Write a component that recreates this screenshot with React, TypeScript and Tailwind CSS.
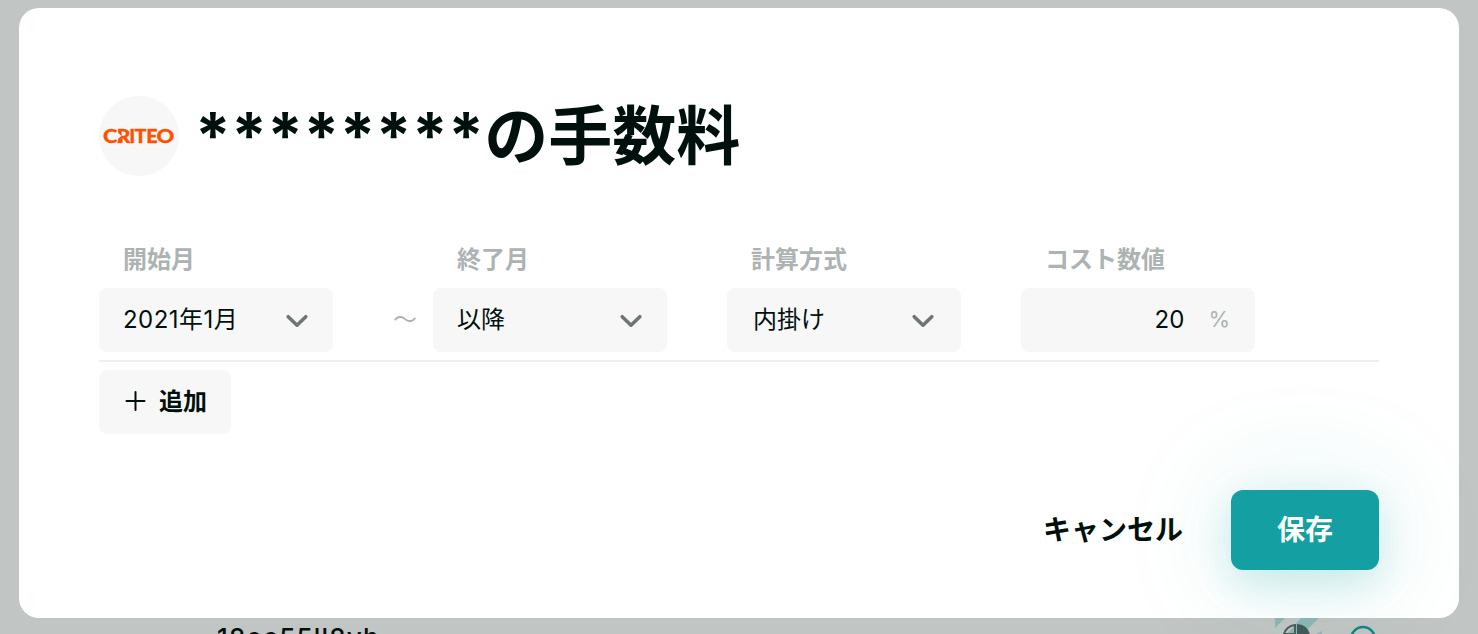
import type { ReactNode } from "react";

const columns = [
  { label: "開始月", value: "2021年1月", gap: "mr-[100px]", pad: "px-6" },
  { label: "終了月", value: "以降", gap: "mr-[60px]", pad: "px-6" },
  { label: "計算方式", value: "内掛け", gap: "mr-[60px]", pad: "px-[26px]" },
];

const logoLetters = [
  { char: "C", x: 4, width: 14.4 },
  { char: "R", x: 17.8, width: 13.6 },
  { char: "I", x: 30.2, width: 6 },
  { char: "T", x: 35.6, width: 12 },
  { char: "E", x: 47.2, width: 11.4 },
  { char: "O", x: 57.6, width: 17.8 },
];

function CriteoLogo() {
  return (
    <svg width="80" height="32" viewBox="0 0 80 32" className="font-['Lato',sans-serif] font-black">
      <g fill="#ff5000" stroke="#ff5000" strokeWidth="0.3" fontSize="19">
        {logoLetters.map((letter) => (
          <text key={letter.char} x={letter.x} y="22.8" textLength={letter.width} lengthAdjust="spacingAndGlyphs">
            {letter.char}
          </text>
        ))}
      </g>
      {/* Notched stem of the R */}
      <path d="M17.5 11.5l5 4.5-5 4z" fill="#f7f7f7" />
      <path d="M17.6 22.8l6-5v5z" fill="#ff5000" />
    </svg>
  );
}

function Chevron() {
  return (
    <svg className="relative top-px" width="24" height="16" viewBox="0 0 24 16" fill="none" stroke="#6d7775" strokeWidth="3.6" strokeLinecap="round" strokeLinejoin="round">
      <path d="M3.2 3.7 12 12.2l8.8-8.5" />
    </svg>
  );
}

type FieldProps = { label: string; className?: string; pad: string; children: ReactNode };

function Field({ label, className, pad, children }: FieldProps) {
  return (
    <div className={`w-[234px] shrink-0 ${className ?? ""}`}>
      <div className="h-[46px] pl-6 text-2xl leading-9 font-bold text-[#adb3b2]">{label}</div>
      <div className={`flex h-16 items-center rounded-lg bg-[#f7f7f7] text-2xl text-[#00100d] ${pad}`}>{children}</div>
    </div>
  );
}

export default function App() {
  return (
    <div className="relative h-[634px] w-[1478px] overflow-hidden bg-[#c1c5c3] pt-2 pl-[19px] font-['Inter','Noto_Sans_CJK_JP',sans-serif] text-[#00100d] [font-optical-sizing:none]">
      {/* Row of the list behind the dialog */}
      <div className="absolute top-[622px] left-[217px] text-[26px] leading-8 font-medium tracking-[1.2px]">18ec55ll8vh</div>
      <svg className="absolute top-[618px] left-[1270px]" width="120" height="16" viewBox="0 0 120 16">
        <path d="M5 0h10L5 10zM31 0h18L33 16H17zM46 16l6-3v3z" fill="#8fb5b5" />
        <path d="M14 16a13 13 0 0 1 11-9v9z" fill="none" stroke="#4c5c5a" strokeWidth="2" />
        <path d="M27 6a13 13 0 0 1 13 11H27z" fill="#415957" />
        <circle cx="93" cy="21" r="12" fill="none" stroke="#0f8585" strokeWidth="2.5" />
      </svg>

      <div className="relative h-[610px] w-[1440px] rounded-[20px] bg-white px-20 pt-[88px]">
        <div className="flex h-20 items-center gap-4">
          <div className="flex size-20 items-center justify-center rounded-full bg-[#f7f7f7]">
            <CriteoLogo />
          </div>
          <h1 className="text-[64px] leading-20 font-bold whitespace-nowrap">
            <span className="tracking-[0.38px]">********</span>の手数料
          </h1>
        </div>

        <div className="mt-[66px] flex border-b-2 border-[#efefef] pb-2">
          {columns.map((column, index) => (
            <Field key={column.label} label={column.label} pad={column.pad} className={`relative ${column.gap}`}>
              <span className={index === 0 ? "flex-1 tracking-[0.45px]" : "flex-1"}>{column.value}</span>
              <Chevron />
              {index === 0 && <span className="absolute left-[294px] text-[#adb3b2]">〜</span>}
            </Field>
          ))}
          <Field label="コスト数値" pad="px-[26px]">
            <span className="flex-1 text-right">20</span>
            <span className="ml-6 text-[22px] text-[#adb3b2] tracking-[-1px]">%</span>
          </Field>
        </div>

        <button className="mt-2 flex h-16 w-[132px] items-center rounded-lg bg-[#f7f7f7] pl-[26px] text-2xl font-bold">
          <svg className="relative -top-px" width="21" height="22" viewBox="0 0 21 22" stroke="#00100d" strokeWidth="2" strokeLinecap="round">
            <path d="M10.5 2v18M1.5 11h18" />
          </svg>
          <span className="ml-[13px]">追加</span>
        </button>

        <div className="mt-14 flex items-center justify-end gap-12 text-[28px] font-bold">
          <button>キャンセル</button>
          <button className="h-20 w-[148px] rounded-xl bg-[#14a0a2] text-white shadow-[0_12px_40px_rgba(20,160,162,0.2),0_4px_120px_rgba(20,160,162,0.16)]">
            保存
          </button>
        </div>
      </div>
    </div>
  );
}
